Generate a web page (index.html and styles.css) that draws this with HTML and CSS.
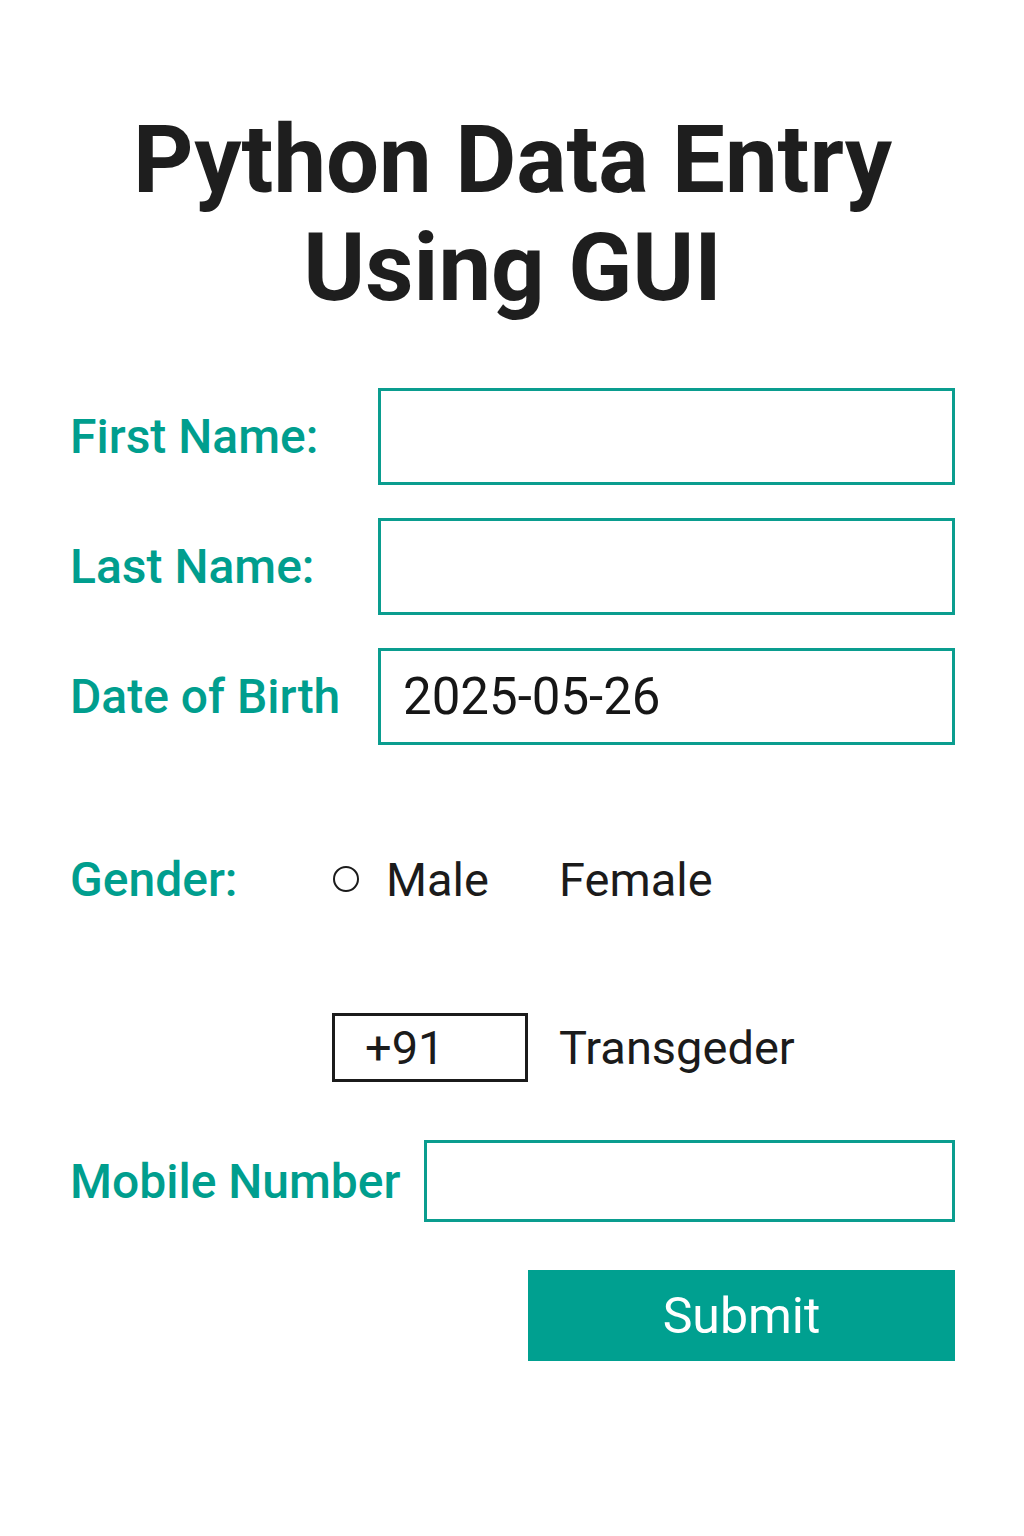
FILE: index.html
```html
<!DOCTYPE html>
<html lang="en">
<head>
<meta charset="utf-8">
<title>Python Data Entry Using GUI</title>
<link rel="stylesheet" href="styles.css">
</head>
<body>
<main class="page">
  <h1 class="title">Python Data Entry<br>Using GUI</h1>

  <form class="form">
    <div class="row">
      <label class="label">First Name:</label>
      <div class="field"></div>
    </div>
    <div class="row">
      <label class="label">Last Name:</label>
      <div class="field"></div>
    </div>
    <div class="row">
      <label class="label">Date of Birth</label>
      <div class="field"><span class="value">2025-05-26</span></div>
    </div>

    <div class="gender">
      <span class="label">Gender:</span>
      <span class="option"><span class="radio"></span>Male</span>
      <span class="option-text">Female</span>
      <span></span>
      <span class="code">+91</span>
      <span class="option-text">Transgeder</span>
    </div>

    <div class="row row-mobile">
      <label class="label">Mobile Number</label>
      <div class="field field-mobile"></div>
    </div>

    <div class="actions">
      <button type="button" class="submit">Submit</button>
    </div>
  </form>
</main>
</body>
</html>
```

FILE: styles.css
```css
* { box-sizing: border-box; }
html, body { margin: 0; background: #ffffff; }
body {
  font-family: Roboto, "Noto Sans", "Liberation Sans", sans-serif;
  color: #1b1b1b;
}
.page {
  padding: 106px 69px 0 70px;
}
.title {
  margin: 0;
  text-align: center;
  font-size: 94px;
  line-height: 108px;
  font-weight: 700;
  color: #1e1e1e;
  letter-spacing: 0;
}
.form {
  margin-top: 66px;
  display: flex;
  flex-direction: column;
}
.row {
  display: flex;
  align-items: center;
  gap: 19px;
  margin-bottom: 33px;
}
.label {
  min-width: 289px;
  font-size: 48px;
  font-weight: 500;
  color: #009e8e;
  white-space: nowrap;
}
.field {
  flex: 1;
  height: 97px;
  border: 3px solid #0a9d8f;
  display: flex;
  align-items: center;
  padding-left: 22px;
}
.value {
  font-size: 51px;
  color: #161616;
}
.gender {
  display: grid;
  grid-template-columns: 262px 227px auto;
  grid-template-rows: 70px 69px;
  row-gap: 99px;
  align-items: center;
  margin-top: 66px;
  margin-bottom: 58px;
}
.gender .label { min-width: 0; }
.option, .option-text {
  font-size: 47px;
  color: #1b1b1b;
  display: flex;
  align-items: center;
}
.radio {
  width: 26px;
  height: 26px;
  border: 2px solid #1b1b1b;
  border-radius: 50%;
  margin: 0 27px 0 1px;
}
.code {
  width: 196px;
  height: 69px;
  border: 3px solid #1b1b1b;
  font-size: 47px;
  display: flex;
  align-items: center;
  padding-left: 30px;
}
.row-mobile { margin-bottom: 48px; gap: 23px; }
.field-mobile { height: 82px; }
.actions {
  display: flex;
  justify-content: flex-end;
}
.submit {
  width: 427px;
  height: 91px;
  border: 0;
  background: #00a090;
  color: #ffffff;
  font-family: Roboto, "Noto Sans", "Liberation Sans", sans-serif;
  font-size: 50px;
  font-weight: 400;
  padding: 0;
}
```
